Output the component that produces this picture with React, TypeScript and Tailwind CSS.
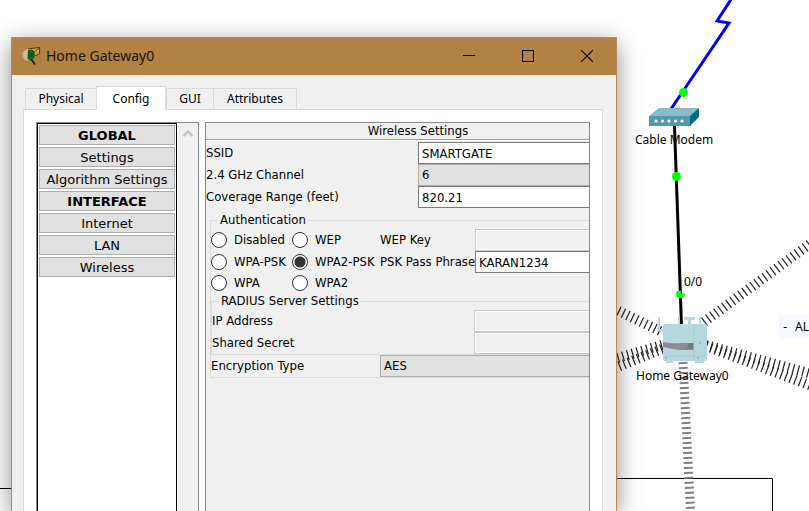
import React, { useState } from "react";

const formText = "font-['DejaVu_Sans_Condensed','Open_Sans',sans-serif] text-[13px] leading-[16px] text-black";
const labelText = "font-['Noto_Sans','Open_Sans',sans-serif] text-[12px] leading-[16px] text-black";

const tabs = [
  { name: "Physical", width: "w-[71px]" },
  { name: "Config", width: "w-[70px]" },
  { name: "GUI", width: "w-[47px]" },
  { name: "Attributes", width: "w-[84px]" },
];

const sections = [
  { title: "GLOBAL", items: ["Settings", "Algorithm Settings"] },
  { title: "INTERFACE", items: ["Internet", "LAN", "Wireless"] },
];

function AppIcon() {
  return (
    <svg width="20" height="20" viewBox="0 0 20 20" aria-hidden="true">
      <path d="M6 3l11.500-1.700v6.500l-6 2.500-5.500-2z" fill="#d9a63a" stroke="#4f3a12" strokeWidth="1" />
      <path d="M6 3l6.500 3 5-4.500" fill="none" stroke="#5a4216" strokeWidth="1" />
      <circle cx="6" cy="9" r="5.500" fill="#cdbb98" stroke="#b9a98a" strokeWidth="1" />
      <path d="M6.500 4.500q3-1.500 5.500 1.500v5.500l-4 3-2-2z" fill="#0b7a17" stroke="#0b300d" strokeWidth="0.800" />
      <path d="M8 6v6M10 6v5" stroke="#093d0e" strokeWidth="0.800" />
      <path d="M9.500 13.500l3.500 5" stroke="#2c2417" strokeWidth="2" />
    </svg>
  );
}

function TitleBar() {
  const button = "flex h-full w-[59px] items-center justify-center";
  return (
    <header className="flex h-[37px] shrink-0 items-center bg-[#b28144] pb-[2px] pl-[10px]">
      <AppIcon />
      <h1 className="ml-1 flex-1 font-['Noto_Sans','Open_Sans',sans-serif] text-[14px] leading-[20px] text-[#1c1408]">
        Home Gateway0
      </h1>
      <button className={button} aria-label="Minimize">
        <svg width="12" height="12" shapeRendering="crispEdges"><path d="M0 5.500h12" stroke="#000" /></svg>
      </button>
      <button className={button} aria-label="Maximize">
        <svg width="12" height="12" shapeRendering="crispEdges"><rect x="0.500" y="0.500" width="11" height="11" fill="none" stroke="#000" /></svg>
      </button>
      <button className={button} aria-label="Close">
        <svg width="12" height="12"><path d="M0 0l12 12M12 0L0 12" stroke="#000" strokeWidth="1.100" /></svg>
      </button>
    </header>
  );
}

const navButton = "h-5 border border-[#adadad] bg-[#e1e1e1] pt-[2px] whitespace-nowrap";

function Sidebar() {
  return (
    <div className="flex w-[163px] shrink-0 border border-b-0 border-[#828790] bg-[#f0f0f0]">
      <nav className="flex w-[140px] flex-col gap-[2px] border border-b-0 border-black bg-white p-px font-['DejaVu_Sans',sans-serif] text-[13px] leading-[16px] text-black">
        {sections.map((section) => (
          <React.Fragment key={section.title}>
            <button className={`${navButton} font-bold`}>{section.title}</button>
            {section.items.map((item) => (
              <button key={item} className={navButton}>{item}</button>
            ))}
          </React.Fragment>
        ))}
      </nav>
      <div className="flex flex-1 justify-center border-l border-white pt-[6px]">
        <svg width="10" height="8" aria-hidden="true"><path d="M0.500 7L5 2.500 9.500 7" fill="none" stroke="#bfbfbf" strokeWidth="2" /></svg>
      </div>
    </div>
  );
}

const field = "h-[22px] w-full min-w-0 appearance-none rounded-none border px-[3px] outline-none";
const editable = "border-[#7a7a7a] bg-white";
const disabled = "border-[#c8c8c8] bg-[#f0f0f0] shadow-[inset_0_0_0_1px_#fff]";
const dropdown = "border-[#adadad] bg-[#e1e1e1]";

function Radio({ name, checked, onPick }: { name: string; checked: boolean; onPick: () => void }) {
  return (
    <label className="flex h-full items-center gap-[7px] whitespace-nowrap">
      <input
        type="radio"
        name="auth"
        checked={checked}
        onChange={onPick}
        className="size-4 shrink-0 appearance-none rounded-full border border-[#333] bg-white checked:bg-[radial-gradient(circle,#333_5px,#fff_6px)]"
      />
      {name}
    </label>
  );
}

function WirelessSettings() {
  const [auth, setAuth] = useState("WPA2-PSK");
  const radio = (name: string) => <Radio name={name} checked={auth === name} onPick={() => setAuth(name)} />;
  return (
    <section className={`min-w-0 flex-1 overflow-hidden border border-b-0 border-[#828790] bg-[#f0f0f0] ${formText}`}>
      <div className="w-[424px]">
        <h2 className="h-[17px] border-b border-[#a0a0a0] text-center">Wireless Settings</h2>
        <div className="grid grid-cols-[212px_1fr] items-center border-t border-white pt-px">
          <label htmlFor="ssid">SSID</label>
          <input id="ssid" className={`${field} ${editable}`} defaultValue="SMARTGATE" />
          <label htmlFor="channel">2.4 GHz Channel</label>
          <select id="channel" className={`${field} ${dropdown}`}><option>6</option></select>
          <label htmlFor="range">Coverage Range (feet)</label>
          <input id="range" className={`${field} ${editable}`} defaultValue="820.21" />
        </div>

        <fieldset className="mt-1 ml-1 min-w-0 border border-[#dcdcdc]">
          <legend className="ml-[7px] px-[2px]">Authentication</legend>
          <div className="grid grid-cols-[81px_88px_95px_1fr] grid-rows-[22px_22px_20px] items-center pt-px">
            {radio("Disabled")}
            {radio("WEP")}
            <label htmlFor="wep">WEP Key</label>
            <input id="wep" disabled className={`${field} ${disabled}`} />
            {radio("WPA-PSK")}
            {radio("WPA2-PSK")}
            <label htmlFor="psk" className="whitespace-nowrap">PSK Pass Phrase</label>
            <input id="psk" className={`${field} ${editable}`} defaultValue="KARAN1234" />
            {radio("WPA")}
            {radio("WPA2")}
          </div>
          <fieldset className="min-w-0 border border-[#dcdcdc]">
            <legend className="ml-[7px] px-[2px]">RADIUS Server Settings</legend>
            <div className="grid grid-cols-[262px_1fr] items-center pt-px">
              <label htmlFor="ip">IP Address</label>
              <input id="ip" disabled className={`${field} ${disabled}`} />
              <label htmlFor="secret">Shared Secret</label>
              <input id="secret" disabled className={`${field} ${disabled}`} />
            </div>
          </fieldset>
          <div className="grid grid-cols-[169px_1fr] items-center">
            <label htmlFor="enc">Encryption Type</label>
            <select id="enc" className={`${field} ${dropdown}`}><option>AES</option></select>
          </div>
        </fieldset>
      </div>
    </section>
  );
}

function GatewayWindow() {
  return (
    <div className="absolute top-[37px] bottom-0 left-[11px] flex w-[606px] flex-col border border-b-0 border-[#b98b50] bg-[#f0f0f0] shadow-[0_6px_22px_rgba(0,0,0,0.45)]">
      <TitleBar />
      <div className="flex min-h-0 flex-1 flex-col pt-[11px] pr-[13px] pl-[11px]">
        <div role="tablist" className="flex h-[23px] shrink-0 items-end pl-[2px]">
          {tabs.map((tab) =>
            tab.name === "Config" ? (
              <button key={tab.name} role="tab" aria-selected className={`relative z-10 -mb-px h-6 ${tab.width} border border-b-0 border-[#d9d9d9] bg-white`}>
                {tab.name}
              </button>
            ) : (
              <button key={tab.name} role="tab" aria-selected={false} className={`h-[21px] ${tab.width} border-t border-l border-[#d9d9d9] last:border-r`}>
                {tab.name}
              </button>
            ),
          )}
        </div>
        <div className="flex min-h-0 flex-1 gap-[6px] border border-b-0 border-[#d9d9d9] bg-white px-3 pt-3">
          <Sidebar />
          <WirelessSettings />
        </div>
      </div>
    </div>
  );
}

function NetworkDrawing() {
  return (
    <svg width="809" height="511" className="absolute top-0 left-0 overflow-visible" aria-hidden="true">
      <path d="M0 488.500h12M600 478.500h172.500V520" fill="none" stroke="#000" />
      <g fill="none" stroke="#222" strokeWidth="10" strokeDasharray="1.200 3.800">
        <path d="M704 322L830 229" />
        <path d="M660 331L600 302" />
        <path d="M662 345L590 366" />
        <path d="M662 349L590 378" />
        <path d="M706 345L830 379" />
        <path d="M706 346L830 393" />
        <path d="M683 362L691 520" stroke="#808080" strokeWidth="9" strokeDasharray="2 3" />
      </g>
      <path d="M732 -2L717 21l12 2L671 109" fill="none" stroke="#0000ff" strokeWidth="3" />
      <path d="M649 116l10-8h40l-8 8z" fill="#8db9cb" />
      <path d="M649 116h42v10h-42z" fill="#5599b1" />
      <path d="M690 116l9-8v9l-9 9z" fill="#006a85" />
      <g fill="#fff">
        <circle cx="656" cy="121" r="1.600" />
        <circle cx="662.500" cy="121" r="1.600" />
        <circle cx="669" cy="121" r="1.600" />
        <circle cx="675.500" cy="121" r="1.600" />
        <circle cx="682" cy="121" r="1.600" />
      </g>
      <path d="M674.500 126L681.500 326" stroke="#000" strokeWidth="3" />
      <g fill="#00ff00">
        <circle cx="683.500" cy="92.500" r="4.500" />
        <circle cx="676.500" cy="176.500" r="4.500" />
        <path d="M677 291a4.500 4.500 0 1 0 8 2.500h-4v-3z" />
      </g>
      <g fill="#b7d7df">
        <path d="M658 317h2v12h3v3h-3l-2-3zM678 317h2v8h-2zM684 317h11v3h-4v5h-3v-5h-4zM699 317h2v8h-2z" />
        <path d="M664 324h42l1 1v35l-1 1h-42l-1-1v-35z" />
        <path d="M666 360h7v3h-7zM695 360h9v3h-9z" />
      </g>
      <path d="M663 342q9 2 19 1h12v7h-14q-9-1-17-3z" fill="#898d8f" />
      <path d="M689 343h4v6h-6z" fill="#777b7d" />
      <path d="M694 324v37M663 356h43" fill="none" stroke="#abcbd3" strokeWidth="1" />
      <g fill="#94b4bc">
        <circle cx="666" cy="358" r="1" />
        <circle cx="700" cy="343" r="1" />
        <circle cx="698" cy="358" r="1" />
      </g>
    </svg>
  );
}

export default function App() {
  return (
    <main className={`relative h-screen w-full overflow-hidden bg-white ${labelText}`}>
      <NetworkDrawing />
      <span className="absolute top-[132px] left-[635px] whitespace-nowrap">Cable Modem</span>
      <span className="absolute top-[274px] left-[682px] bg-white px-[2px] whitespace-nowrap">0/0</span>
      <span className="absolute top-[368px] left-[636px] whitespace-nowrap">Home Gateway0</span>
      <span className="absolute top-[315px] right-0 flex gap-2 bg-[#f7f8fe] py-1 pl-1 whitespace-nowrap">
        <span>-</span>
        <span>AL</span>
      </span>
      <GatewayWindow />
    </main>
  );
}
